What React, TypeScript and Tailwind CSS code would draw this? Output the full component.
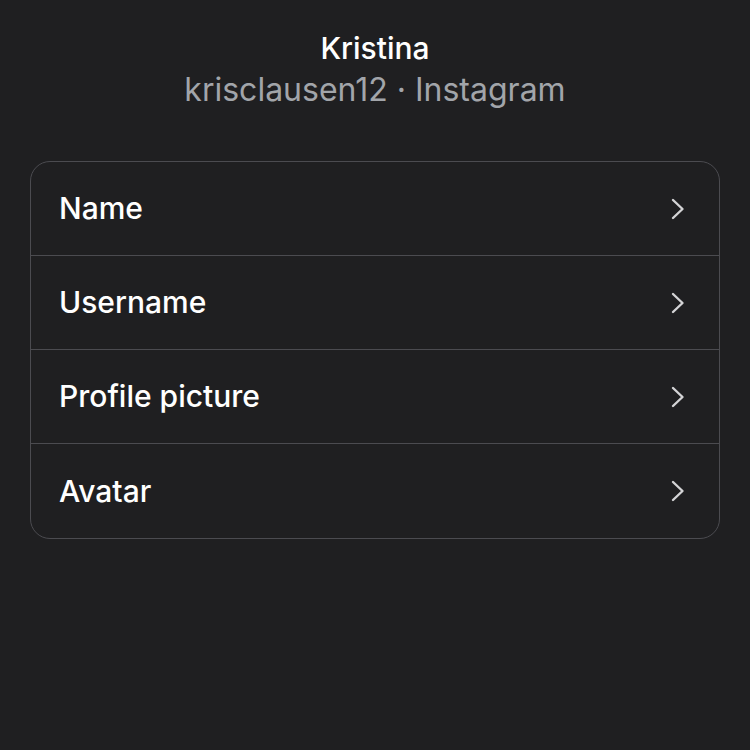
const ROWS = ['Name', 'Username', 'Profile picture', 'Avatar'];

const Chevron = () => (
  <svg width="14" height="22" viewBox="0 0 14 22" fill="none" className="text-[#d4d4d6]">
    <polyline points="2,2 11.5,11 2,20" stroke="currentColor" strokeWidth="2.4" strokeLinecap="round" strokeLinejoin="round" />
  </svg>
);

const App = () => {
  return (
    <main className="w-[750px] h-[750px] bg-[#1f1f21] font-['Inter',sans-serif] text-white overflow-hidden">
      <header className="flex flex-col items-center pt-[28px]">
        <h1 className="text-[30px] leading-[40px] font-medium">Kristina</h1>
        <p className="text-[32px] leading-[44px] text-[#a2a5aa]">krisclausen12 · Instagram</p>
      </header>

      <section className="mx-[30px] mt-[49px] border border-[#4b4b50] rounded-[20px]">
        {ROWS.map((label, i) => (
          <div
            key={label}
            className={`flex items-center justify-between h-[94px] pl-[28px] pr-[34px] ${i < ROWS.length - 1 ? 'border-b border-[#4b4b50]' : ''}`}
          >
            <span className="text-[30px] font-medium">{label}</span>
            <Chevron />
          </div>
        ))}
      </section>
    </main>
  );
};

export default App;
